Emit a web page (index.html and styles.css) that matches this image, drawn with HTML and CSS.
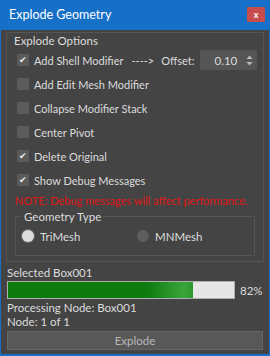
FILE: index.html
```html
<!DOCTYPE html>
<html lang="en">
<head>
    <meta charset="UTF-8">
    <title>Explode Geometry</title>
    <link rel="stylesheet" href="styles.css">
</head>
<body>
    <div class="window">
        <div class="titleBar">
            <span class="title">Explode Geometry</span>
            <button class="closeButton">x</button>
        </div>
        <div class="content">
            <div class="groupBox">
                <div class="groupTitle">Explode Options</div>
                <div class="row">
                    <span class="check checked">&#10004;</span>
                    <span class="label">Add Shell Modifier</span>
                    <span class="arrow">----&gt;</span>
                    <span class="label">Offset:</span>
                    <div class="spinner">
                        <span class="spinValue">0.10</span>
                        <span class="spinArrows">
                            <svg width="7" height="11" viewBox="0 0 7 11"><path d="M3.5 0.5 L6.5 4 L0.5 4 Z M3.5 10.5 L6.5 7 L0.5 7 Z" fill="#bbb"/></svg>
                        </span>
                    </div>
                </div>
                <div class="row">
                    <span class="check"></span>
                    <span class="label">Add Edit Mesh Modifier</span>
                </div>
                <div class="row">
                    <span class="check"></span>
                    <span class="label">Collapse Modifier Stack</span>
                </div>
                <div class="row">
                    <span class="check"></span>
                    <span class="label">Center Pivot</span>
                </div>
                <div class="row">
                    <span class="check checked">&#10004;</span>
                    <span class="label">Delete Original</span>
                </div>
                <div class="row">
                    <span class="check checked">&#10004;</span>
                    <span class="label">Show Debug Messages</span>
                </div>
                <div class="note">NOTE: Debug messages will affect performance.</div>
                <div class="subGroup">
                    <div class="subTitle">Geometry Type</div>
                    <div class="radioRow">
                        <div class="radioItem">
                            <span class="radio selected"></span>
                            <span class="label">TriMesh</span>
                        </div>
                        <div class="radioItem">
                            <span class="radio"></span>
                            <span class="label">MNMesh</span>
                        </div>
                    </div>
                </div>
            </div>
            <div class="status firstStatus">Selected Box001</div>
            <div class="progressRow">
                <div class="progressBar">
                    <div class="progressFill" style="width: 82%;"></div>
                </div>
                <span class="percent">82%</span>
            </div>
            <div class="status">Processing Node: Box001</div>
            <div class="status">Node: 1 of 1</div>
            <button class="explodeButton">Explode</button>
        </div>
    </div>
</body>
</html>
```

FILE: styles.css
```css
* {
    box-sizing: border-box;
}

body {
    margin: 0;
    width: 270px;
    height: 356px;
    font-family: 'Lato', 'Noto Sans', sans-serif;
    font-size: 11.5px;
    color: #dcdcdc;
    background: #444444;
}

.window {
    height: 356px;
    border: 1px solid #1670c8;
    border-top: none;
    border-bottom-width: 2px;
    background: #444444;
    display: flex;
    flex-direction: column;
}

.titleBar {
    height: 30px;
    flex: none;
    background: #1670c8;
    display: flex;
    align-items: center;
    justify-content: space-between;
    padding: 0 4px 2px 8px;
}

.title {
    color: #ffffff;
    font-size: 12.5px;
}

.closeButton {
    width: 18px;
    height: 15px;
    border: none;
    background: #c94c4c;
    color: #ffffff;
    font-family: 'Lato', sans-serif;
    font-size: 9px;
    font-weight: bold;
    line-height: 13px;
    padding: 0;
}

.content {
    flex: 1;
    padding: 2px 5px 3px 5px;
    display: flex;
    flex-direction: column;
}

.groupBox {
    border: 1px solid #555555;
    padding: 0 6px;
    height: 230px;
    flex: none;
}

.groupTitle {
    height: 15px;
    line-height: 15px;
    margin-left: 1px;
}

.row {
    height: 24px;
    display: flex;
    align-items: center;
    padding-left: 4px;
    white-space: nowrap;
    font-size: 11px;
}

.check {
    width: 12px;
    height: 12px;
    flex: none;
    background: #5b5b5b;
    color: #e8e8e8;
    font-size: 9px;
    line-height: 12px;
    text-align: center;
    margin-right: 5px;
}

.label {
    white-space: nowrap;
}

.arrow {
    margin-left: 8px;
    margin-right: 7px;
}

.spinner {
    margin-left: 5px;
    width: 61px;
    height: 20px;
    background: #555555;
    display: flex;
    align-items: center;
    justify-content: space-between;
    padding: 0 4px 0 15px;
    font-size: 11.5px;
}

.spinArrows {
    display: flex;
    align-items: center;
}

.note {
    color: #e01515;
    font-size: 11px;
    height: 18px;
    line-height: 18px;
    margin-left: 2px;
    white-space: nowrap;
}

.subGroup {
    border: 1px solid #555555;
    margin: 6px 2px 0 2px;
    height: 40px;
    padding: 0 6px;
}

.subTitle {
    width: fit-content;
    height: 12px;
    line-height: 12px;
    margin-top: -6px;
    padding: 0 2px;
    background: #444444;
}

.radioRow {
    display: grid;
    grid-template-columns: 115px 1fr;
    align-items: center;
    height: 22px;
    margin-top: 2px;
}

.radioItem {
    display: flex;
    align-items: center;
}

.radio {
    width: 12px;
    height: 12px;
    border-radius: 50%;
    background: #5d5d5d;
    margin-right: 6px;
}

.radio.selected {
    background: #dcdcdc;
    box-shadow: 0 0 0 1px #6a6a6a;
}

.status {
    height: 14px;
    line-height: 14px;
    margin-left: 1px;
}

.firstStatus {
    margin-top: 4px;
}

.progressRow {
    display: flex;
    align-items: center;
    margin: 1px 0 2px 1px;
    height: 18px;
}

.progressBar {
    width: 228px;
    height: 18px;
    background: #e6e6e6;
    border: 1px solid #b0b0b0;
}

.progressFill {
    height: 100%;
    background: linear-gradient(to right, #0f7b0f 75%, #3aa43a 95%, #2d962d);
}

.percent {
    margin-left: 5px;
}

.explodeButton {
    margin-top: 2px;
    margin-left: 1px;
    height: 19px;
    width: 256px;
    background: #585858;
    border: 1px solid #666666;
    color: #b8b8b8;
    font-family: 'Lato', sans-serif;
    font-size: 11.5px;
    padding: 0;
}
```
